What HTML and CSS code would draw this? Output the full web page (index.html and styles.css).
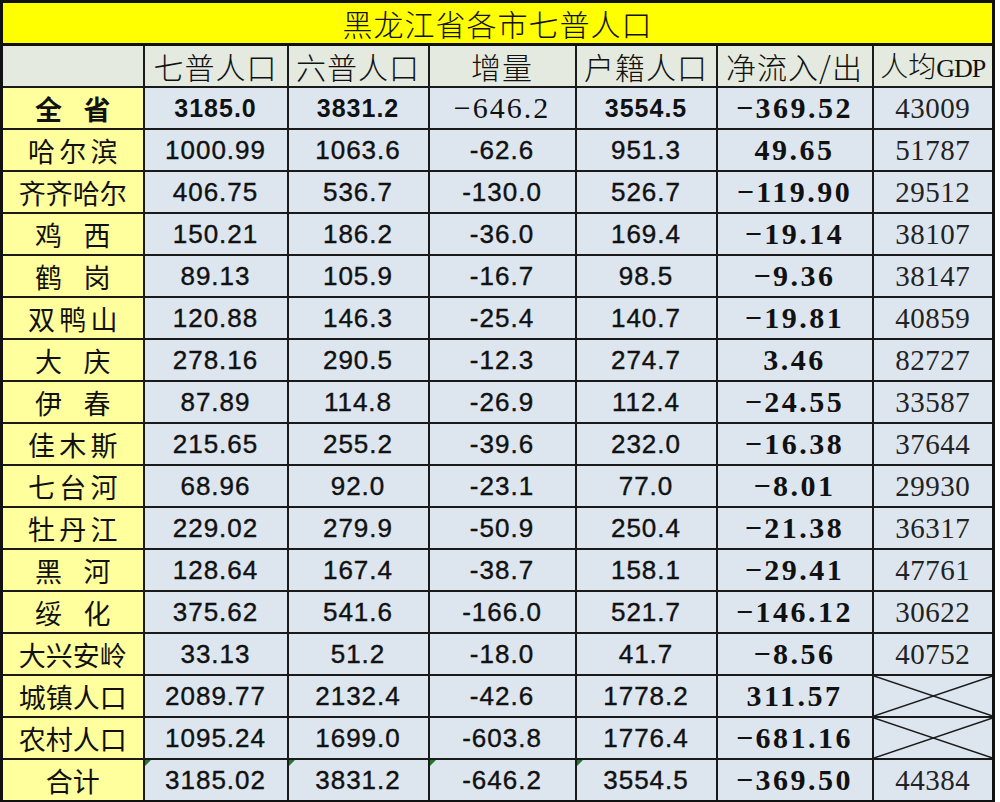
FILE: index.html
```html
<!DOCTYPE html>
<html lang="zh">
<head>
<meta charset="utf-8">
<title>黑龙江省各市七普人口</title>
<link rel="stylesheet" href="styles.css">
</head>
<body>
<table class="sheet">
  <colgroup>
    <col class="c1"><col class="c2"><col class="c3"><col class="c4"><col class="c5"><col class="c6"><col class="c7">
  </colgroup>
  <tr class="title-row"><td colspan="7" class="title">黑龙江省各市七普人口</td></tr>
  <tr class="head-row">
    <td class="head"></td>
    <td class="head">七普人口</td>
    <td class="head">六普人口</td>
    <td class="head">增量</td>
    <td class="head">户籍人口</td>
    <td class="head">净流入/出</td>
    <td class="head tight">人均<span class="gdp">GDP</span></td>
  </tr>
  <tr>
    <td class="name n2 strong">全省</td>
    <td class="num bold">3185.0</td>
    <td class="num bold">3831.2</td>
    <td class="ser">−646.2</td>
    <td class="num bold">3554.5</td>
    <td class="net">−369.52</td>
    <td class="gdpv">43009</td>
  </tr>
  <tr><td class="name n3">哈尔滨</td><td class="num">1000.99</td><td class="num">1063.6</td><td class="num">-62.6</td><td class="num">951.3</td><td class="net">49.65</td><td class="gdpv">51787</td></tr>
  <tr><td class="name">齐齐哈尔</td><td class="num">406.75</td><td class="num">536.7</td><td class="num">-130.0</td><td class="num">526.7</td><td class="net">−119.90</td><td class="gdpv">29512</td></tr>
  <tr><td class="name n2">鸡西</td><td class="num">150.21</td><td class="num">186.2</td><td class="num">-36.0</td><td class="num">169.4</td><td class="net">−19.14</td><td class="gdpv">38107</td></tr>
  <tr><td class="name n2">鹤岗</td><td class="num">89.13</td><td class="num">105.9</td><td class="num">-16.7</td><td class="num">98.5</td><td class="net">−9.36</td><td class="gdpv">38147</td></tr>
  <tr><td class="name n3">双鸭山</td><td class="num">120.88</td><td class="num">146.3</td><td class="num">-25.4</td><td class="num">140.7</td><td class="net">−19.81</td><td class="gdpv">40859</td></tr>
  <tr><td class="name n2">大庆</td><td class="num">278.16</td><td class="num">290.5</td><td class="num">-12.3</td><td class="num">274.7</td><td class="net">3.46</td><td class="gdpv">82727</td></tr>
  <tr><td class="name n2">伊春</td><td class="num">87.89</td><td class="num">114.8</td><td class="num">-26.9</td><td class="num">112.4</td><td class="net">−24.55</td><td class="gdpv">33587</td></tr>
  <tr><td class="name n3">佳木斯</td><td class="num">215.65</td><td class="num">255.2</td><td class="num">-39.6</td><td class="num">232.0</td><td class="net">−16.38</td><td class="gdpv">37644</td></tr>
  <tr><td class="name n3">七台河</td><td class="num">68.96</td><td class="num">92.0</td><td class="num">-23.1</td><td class="num">77.0</td><td class="net">−8.01</td><td class="gdpv">29930</td></tr>
  <tr><td class="name n3">牡丹江</td><td class="num">229.02</td><td class="num">279.9</td><td class="num">-50.9</td><td class="num">250.4</td><td class="net">−21.38</td><td class="gdpv">36317</td></tr>
  <tr><td class="name n2">黑河</td><td class="num">128.64</td><td class="num">167.4</td><td class="num">-38.7</td><td class="num">158.1</td><td class="net">−29.41</td><td class="gdpv">47761</td></tr>
  <tr><td class="name n2">绥化</td><td class="num">375.62</td><td class="num">541.6</td><td class="num">-166.0</td><td class="num">521.7</td><td class="net">−146.12</td><td class="gdpv">30622</td></tr>
  <tr><td class="name">大兴安岭</td><td class="num">33.13</td><td class="num">51.2</td><td class="num">-18.0</td><td class="num">41.7</td><td class="net">−8.56</td><td class="gdpv">40752</td></tr>
  <tr><td class="name">城镇人口</td><td class="num">2089.77</td><td class="num">2132.4</td><td class="num">-42.6</td><td class="num">1778.2</td><td class="net">311.57</td>
    <td class="cross"><svg class="x" viewBox="0 0 100 100" preserveAspectRatio="none"><line x1="0" y1="0" x2="100" y2="100"/><line x1="0" y1="100" x2="100" y2="0"/></svg></td></tr>
  <tr><td class="name">农村人口</td><td class="num">1095.24</td><td class="num">1699.0</td><td class="num">-603.8</td><td class="num">1776.4</td><td class="net">−681.16</td>
    <td class="cross"><svg class="x" viewBox="0 0 100 100" preserveAspectRatio="none"><line x1="0" y1="0" x2="100" y2="100"/><line x1="0" y1="100" x2="100" y2="0"/></svg></td></tr>
  <tr><td class="name">合计</td><td class="num tri">3185.02</td><td class="num tri">3831.2</td><td class="num tri">-646.2</td><td class="num tri">3554.5</td><td class="net">−369.50</td><td class="gdpv">44384</td></tr>
</table>
</body>
</html>
```

FILE: styles.css
```css
html, body {
  margin: 0;
  padding: 0;
  background: #ffffff;
}

.sheet {
  border-collapse: collapse;
  table-layout: fixed;
  width: 992px;
  border: 3px solid #111;
  color: #111;
  font-family: "Noto Sans CJK SC", sans-serif;
}

.c1 { width: 142px; }
.c2 { width: 144px; }
.c3 { width: 141px; }
.c4 { width: 147px; }
.c5 { width: 141px; }
.c6 { width: 156px; }
.c7 { width: 121px; }

.sheet td {
  border: 2px solid #1a1a1a;
  height: 40px;
  padding: 0;
  text-align: center;
  vertical-align: middle;
  background: #dde6ef;
  white-space: nowrap;
  position: relative;
}

.title-row td {
  height: 40px;
  border-bottom: 3px solid #111;
}

.title {
  background: #ffff00 !important;
  font-size: 30px;
  font-weight: 300;
  letter-spacing: 1px;
  line-height: 1;
}

.head {
  background: #e4eadf !important;
  font-size: 30px;
  font-weight: 300;
  letter-spacing: 1px;
  line-height: 1;
}

.head.tight {
  letter-spacing: 0;
  font-size: 28px;
}

.gdp {
  font-family: "Liberation Serif", serif;
  font-size: 26px;
  letter-spacing: -1px;
}

.name {
  background: #ffff9e !important;
  font-size: 27px;
  font-weight: 400;
  line-height: 1;
}

.name.n2 {
  text-align: justify;
  text-align-last: justify;
  padding: 0 32px;
}

.name.n3 {
  text-align: justify;
  text-align-last: justify;
  padding: 0 25px;
}

.name.strong {
  font-weight: 700;
}

.num {
  font-family: "Liberation Sans", Arial, sans-serif;
  font-size: 26px;
  letter-spacing: 1px;
  line-height: 1;
  -webkit-text-stroke: 0.4px #111;
}

.num.bold {
  font-weight: 700;
  font-size: 25px;
  -webkit-text-stroke: 0;
}

.ser {
  font-family: "Liberation Serif", serif;
  font-size: 30px;
  letter-spacing: 2px;
  line-height: 1;
}

.net {
  font-family: "Liberation Serif", serif;
  font-weight: 700;
  font-size: 30px;
  letter-spacing: 2.5px;
  line-height: 1;
}

.gdpv {
  font-family: "Liberation Serif", serif;
  font-size: 29px;
  letter-spacing: 0.5px;
  line-height: 1;
  color: #222;
}

.cross {
  padding: 0;
}

.x {
  display: block;
  width: 100%;
  height: 40px;
}

.x line {
  stroke: #1a1a1a;
  stroke-width: 1.5;
  vector-effect: non-scaling-stroke;
}

.tri::before {
  content: "";
  position: absolute;
  left: 0;
  top: 0;
  width: 0;
  height: 0;
  border-top: 6px solid #1e7a2a;
  border-right: 6px solid transparent;
}
```
